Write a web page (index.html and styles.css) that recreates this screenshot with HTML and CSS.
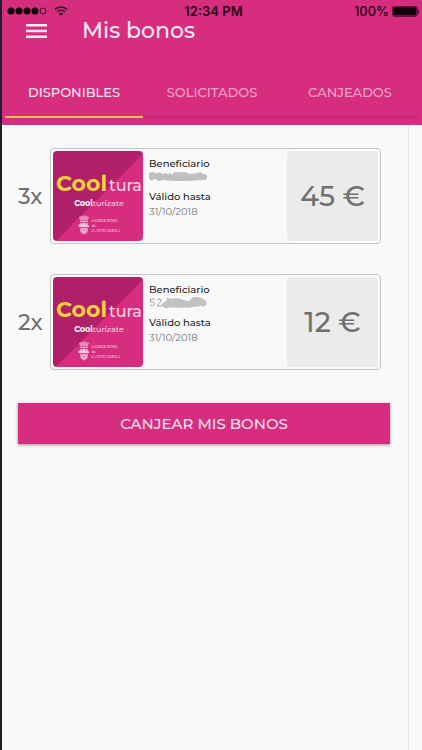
FILE: index.html
```html
<!DOCTYPE html>
<html lang="es">
<head>
<meta charset="UTF-8">
<meta name="viewport" content="width=device-width, initial-scale=1">
<title>Mis bonos</title>
<link rel="stylesheet" href="styles.css">
</head>
<body>
  <header class="header">
    <div class="status">
      <div class="status-left">
        <svg width="40" height="8" viewBox="0 0 40 8">
          <circle cx="4" cy="4" r="3.5"/><circle cx="12" cy="4" r="3.5"/><circle cx="20" cy="4" r="3.5"/><circle cx="28" cy="4" r="3.5"/>
          <circle cx="36" cy="4" r="3" fill="none" stroke="#240515" stroke-width="0.8"/>
        </svg>
        <svg width="14" height="10" viewBox="0 0 14 10" fill="none">
          <path d="M1 3.4Q7-1.4 13 3.4M3.1 5.7Q7 2.5 10.9 5.7" fill="none" stroke="#240515" stroke-width="1.4"/>
          <path d="M4.6 7.4Q7 5.4 9.4 7.4L7 9.8z" fill="#240515"/>
        </svg>
      </div>
      <div class="status-time">12:34 PM</div>
      <div class="status-right">
        <span>100%</span>
        <svg width="28" height="11" viewBox="0 0 28 11">
          <rect x="0.4" y="0.4" width="25" height="10" rx="2" fill="none" stroke="#240515" stroke-width="0.7"/>
          <rect x="1.3" y="1.2" width="23.2" height="8.4" rx="1"/>
          <path d="M26.3 3.5q1.7 2 0 4z"/>
        </svg>
      </div>
    </div>
    <div class="toolbar">
      <button class="menu-button" type="button" aria-label="Menú">
        <svg width="21" height="14" viewBox="0 0 21 14">
          <path class="menu-lines" d="M0 0h21v2.5H0zM0 5.8h21v2.4H0zM0 11.5h21V14H0z"/>
        </svg>
      </button>
      <h1>Mis bonos</h1>
    </div>
    <nav class="tabs">
      <a class="tab active" href="#disponibles">DISPONIBLES</a>
      <a class="tab" href="#solicitados">SOLICITADOS</a>
      <a class="tab" href="#canjeados">CANJEADOS</a>
    </nav>
  </header>

  <svg class="symbols" aria-hidden="true">
    <symbol id="escudo" viewBox="0 0 12 20">
      <path d="M1.5 3.5Q0 1.5 2.5 1.5Q4 .3 5.5 1.3V0h1v1.3Q8 .3 9.5 1.5Q12 1.5 10.5 3.5L9.7 5.2H2.3z" fill="#e98ab8"/>
      <path d="M2 5.8h8v1H2z" fill="#f8c9df"/>
      <path d="M2 7.6h8v5H2z" fill="#dc609c"/>
      <path d="M.5 12V9.5h2V8h1.2v1.3H5V7.8h2v2h1.2V8.2h1.3v2H11V12z" fill="#f8c9df"/>
      <path d="M2 13h8v2.5Q9.5 18.5 6 19.5Q2.5 18.5 2 15.5z" fill="#e98ab8"/>
      <circle cx="6" cy="15.6" r="2.2" fill="#f8c9df"/>
      <circle cx="6" cy="15.6" r=".8" fill="#c12970"/>
    </symbol>
  </svg>

  <main class="content">
    <ul class="bonos">
      <li class="bono">
        <span class="cantidad">3x</span>
        <article class="card">
          <div class="logo">
            <div class="marca"><b>Cool</b><span>tura</span></div>
            <div class="lema"><b>Cool</b>turízate</div>
            <div class="gobierno">
              <svg width="12" height="20"><use href="#escudo"/></svg>
              <span>GOBIERNO<br>de<br>CANTABRIA</span>
            </div>
          </div>
          <dl class="datos">
            <dt>Beneficiario</dt>
            <dd>
              <svg width="60" height="11" viewBox="0 0 60 11" fill="none">
                <path d="M6 2H1.5V5Q6 4.5 5.5 7.5Q4 9.5 1 8M8 3Q12 .5 12 4L8 9h5M17 2v7M21 2v5h4M29 2h-4v3M33 2h5l-3 7" stroke="#a0a0a0"/>
                <path d="M2 5Q10 5 16 6T35 6T55 6" stroke="#bfbfbf" stroke-width="6" stroke-linecap="round"/>
                <path d="M25 4Q30 1 36 4T47 4T54 5" stroke="#c2c2c2" stroke-width="3" stroke-linecap="round"/>
                <path d="M18 8Q32 10 53 8" stroke="#bfbfbf" stroke-width="2" stroke-linecap="round"/>
              </svg>
            </dd>
            <dt>Válido hasta</dt>
            <dd>31/10/2018</dd>
          </dl>
          <div class="importe">45 €</div>
        </article>
      </li>
      <li class="bono">
        <span class="cantidad">2x</span>
        <article class="card">
          <div class="logo">
            <div class="marca"><b>Cool</b><span>tura</span></div>
            <div class="lema"><b>Cool</b>turízate</div>
            <div class="gobierno">
              <svg width="12" height="20"><use href="#escudo"/></svg>
              <span>GOBIERNO<br>de<br>CANTABRIA</span>
            </div>
          </div>
          <dl class="datos">
            <dt>Beneficiario</dt>
            <dd>
              <svg width="60" height="11" viewBox="0 0 60 11" fill="none">
                <path d="M6 2H1.5V5Q6 4.5 5.5 7.5Q4 9.5 1 8M8 3Q12 .5 12 4L8 9h5M17 2h4l-3 5" stroke="#a0a0a0"/>
                <path d="M17 8Q24 3 33 6T44 5T54 6" stroke="#c2c2c2" stroke-width="7" stroke-linecap="round"/>
                <path d="M14 8Q25 10 34 9L50 8" stroke="#c2c2c2" stroke-width="3" stroke-linecap="round"/>
              </svg>
            </dd>
            <dt>Válido hasta</dt>
            <dd>31/10/2018</dd>
          </dl>
          <div class="importe">12 €</div>
        </article>
      </li>
    </ul>
    <button class="canjear" type="button">CANJEAR MIS BONOS</button>
  </main>
</body>
</html>
```
FILE: styles.css
```css
* {
  box-sizing: border-box;
}

body {
  margin: 0;
  min-height: 100vh;
  display: flex;
  flex-direction: column;
  border-left: 2px solid #241c2c;
  background-color: #f9f9f9;
  font-family: Montserrat, Inter, "Open Sans", sans-serif;
}

.header {
  height: 125px;
  background-color: #d72d7f;
}

.status {
  display: grid;
  grid-template-columns: 1fr auto 1fr;
  align-items: center;
  height: 20px;
  padding: 2px 2px 0 5px;
  color: #240515;
  font-family: Inter, sans-serif;
  font-size: 13px;
  line-height: 16px;
}

.status svg {
  fill: #120009;
}

.status-left,
.status-right {
  display: flex;
  align-items: center;
  gap: 3px;
}

.status-left {
  gap: 7px;
}

.status-right {
  justify-content: flex-end;
  font-weight: 500;
}

.status-time {
  font-weight: 600;
}

.toolbar {
  display: flex;
  align-items: center;
  height: 22px;
  padding-left: 24px;
  gap: 35px;
}

.menu-button {
  display: flex;
  padding: 0;
  border: none;
  background: none;
  cursor: pointer;
}

.menu-lines {
  fill: #fde9f3;
}

.toolbar h1 {
  margin: 0;
  color: #fde9f3;
  font-size: 22px;
  line-height: 22px;
  font-weight: 500;
}

.tabs {
  display: flex;
  height: 76px;
  margin: 0 3px;
  padding-top: 26px;
}

.tab {
  flex: 1;
  display: flex;
  align-items: center;
  justify-content: center;
  border-bottom: 2px solid #c52a78;
  color: #f0a3ca;
  font-size: 13px;
  font-weight: 500;
  text-decoration: none;
}

.tab.active {
  border-bottom-color: #fac33c;
  color: #fde9f3;
}

.symbols {
  display: none;
}

.content {
  flex: 1;
  margin-right: 13px;
  padding: 23px 18px 0 16px;
  border-right: 1px solid #e4e4e4;
}

.bonos {
  list-style-type: none;
  margin: 0;
  padding: 0 9px 0 0;
}

.bono {
  display: flex;
  align-items: center;
  margin-bottom: 30px;
}

.cantidad {
  width: 32px;
  color: #707070;
  font-size: 22px;
  font-weight: 500;
}

.card {
  flex: 1;
  display: flex;
  height: 96px;
  padding: 2px;
  border: 1px solid #c4c4c4;
  border-radius: 4px;
}

.logo {
  display: flex;
  flex-direction: column;
  align-items: center;
  width: 90px;
  padding: 20px 0 0 2px;
  border-radius: 4px;
  background: linear-gradient(135deg, #b02068 51%, #d72d7f 52%);
  color: #f9d3e4;
}

.marca {
  display: flex;
  align-items: baseline;
  gap: 2px;
  line-height: 26px;
}

.marca b {
  color: #fcd03c;
  font-size: 22px;
}

.marca span {
  font-size: 16px;
  font-weight: 500;
}

.lema {
  font-size: 8px;
  font-weight: 500;
  line-height: 8px;
}

.lema b {
  color: #fff;
}

.gobierno {
  display: flex;
  align-items: center;
  gap: 2px;
  margin-top: 8px;
  font-family: "Liberation Serif", serif;
  font-size: 5px;
  line-height: 5px;
}

.datos {
  flex: 1;
  margin: 0;
  padding: 5px 0 0 6px;
  font-size: 10px;
}

.datos dt {
  color: #1c1c1c;
  font-weight: 500;
  line-height: 15px;
}

.datos dd {
  height: 15px;
  margin: 0 0 3px;
  color: #757575;
  line-height: 15px;
}

.datos svg {
  display: block;
}

.importe {
  display: flex;
  align-items: center;
  justify-content: center;
  width: 91px;
  border-radius: 2px;
  background-color: #ebebeb;
  color: #707070;
  font-size: 28px;
  font-weight: 500;
}

.canjear {
  display: block;
  width: 100%;
  height: 41px;
  margin-top: 33px;
  border: none;
  background-color: #d72d7f;
  box-shadow: 0 1px 3px rgba(0, 0, 0, 0.4);
  color: #fde3ef;
  font-family: inherit;
  font-size: 15px;
  font-weight: 500;
  cursor: pointer;
}
```
